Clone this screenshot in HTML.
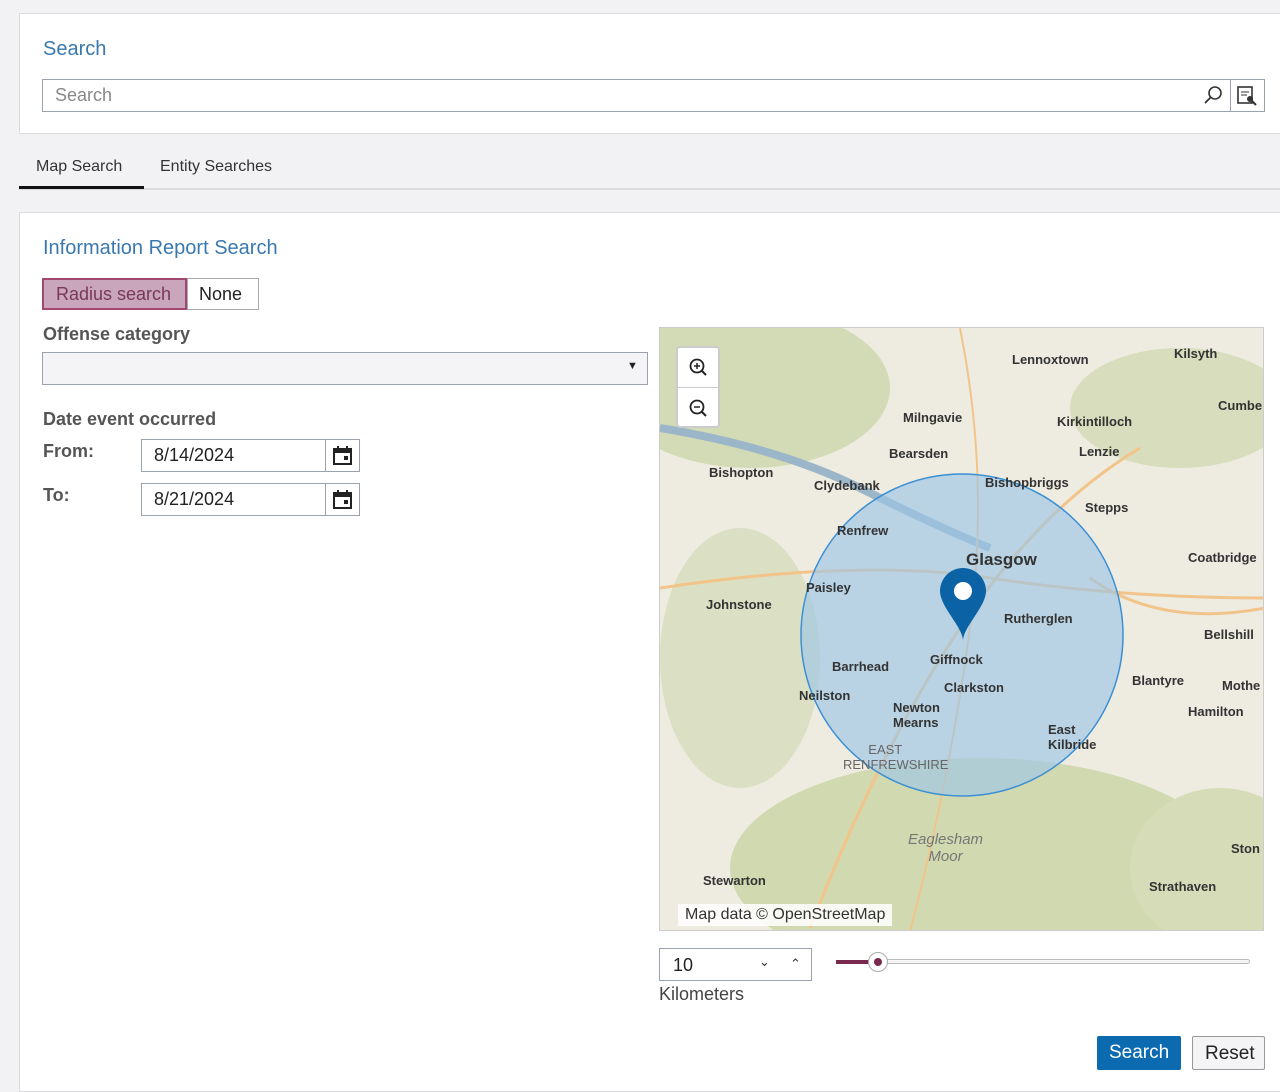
<!DOCTYPE html>
<html><head><style>
*{box-sizing:border-box;margin:0;padding:0}
body{width:1280px;height:1076px;background:#f2f2f4;font-family:"Liberation Sans",sans-serif;position:relative;overflow:hidden;color:#333}
.abs{position:absolute}
.card{position:absolute;background:#fff;border:1px solid #dcdcdf}
.h{color:#3a78b0;font-size:20px}
.lbl{font-size:18px;color:#555}
.ml{position:absolute;font-size:13px;font-weight:bold;color:#333;white-space:nowrap}
</style></head><body>
<div class="card" style="left:19px;top:13px;width:1275px;height:121px"></div>
<div class="abs h" style="left:43px;top:38px">Search</div>
<div class="abs" style="left:42px;top:79px;width:1223px;height:33px;border:1px solid #9aa3ad;background:#fff"></div>
<div class="abs" style="left:55px;top:85px;font-size:18px;color:#888">Search</div>
<svg class="abs" style="left:1203px;top:85px" width="20" height="20"><circle cx="12" cy="8" r="6" fill="none" stroke="#333" stroke-width="1.6"/><line x1="8" y1="12" x2="2" y2="18" stroke="#333" stroke-width="1.8"/></svg>
<div class="abs" style="left:1230px;top:79px;width:35px;height:33px;border-left:1px solid #9aa3ad"></div>
<svg class="abs" style="left:1237px;top:86px" width="20" height="20"><rect x="1" y="1" width="14" height="16" fill="none" stroke="#333" stroke-width="1.6"/><line x1="4" y1="6" x2="12" y2="6" stroke="#333"/><line x1="4" y1="9" x2="10" y2="9" stroke="#333"/><circle cx="13" cy="13" r="3" fill="#333"/><line x1="15" y1="15" x2="19" y2="19" stroke="#333" stroke-width="2"/></svg>
<div class="abs" style="left:19px;top:188px;width:1261px;height:2px;background:#dcdcdf"></div>
<div class="abs" style="left:19px;top:186px;width:125px;height:3px;background:#111"></div>
<div class="abs" style="left:36px;top:158px;font-size:16px;color:#333">Map Search</div>
<div class="abs" style="left:160px;top:158px;font-size:16px;color:#333">Entity Searches</div>
<div class="card" style="left:19px;top:212px;width:1275px;height:880px"></div>
<div class="abs h" style="left:43px;top:237px">Information Report Search</div>
<div class="abs" style="left:42px;top:278px;width:145px;height:32px;background:#c9a6bb;border:2px solid #a0486f;color:#7a3858;font-size:18px;padding:4px 0 0 12px">Radius search</div>
<div class="abs" style="left:187px;top:278px;width:72px;height:32px;background:#fff;border:1px solid #aaa;font-size:18px;padding:5px 0 0 11px;color:#222">None</div>
<div class="abs lbl" style="left:43px;top:324px;font-weight:bold">Offense category</div>
<div class="abs" style="left:42px;top:352px;width:606px;height:33px;background:#f4f4f6;border:1px solid #9aa3ad"></div>
<div class="abs" style="left:627px;top:360px;font-size:11px;color:#222">▼</div>
<div class="abs lbl" style="left:43px;top:409px;font-weight:bold">Date event occurred</div>
<div class="abs lbl" style="left:43px;top:441px;font-weight:bold">From:</div>
<div class="abs lbl" style="left:43px;top:485px;font-weight:bold">To:</div>
<div class="abs" style="left:141px;top:439px;width:219px;height:33px;border:1px solid #9aa3ad;background:#fff;font-size:18px;padding:5px 0 0 12px;color:#222">8/14/2024</div>
<div class="abs" style="left:141px;top:483px;width:219px;height:33px;border:1px solid #9aa3ad;background:#fff;font-size:18px;padding:5px 0 0 12px;color:#222">8/21/2024</div>
<div class="abs" style="left:325px;top:439px;width:1px;height:33px;background:#9aa3ad"></div>
<div class="abs" style="left:325px;top:483px;width:1px;height:33px;background:#9aa3ad"></div>
<svg class="abs" style="left:333px;top:446px" width="20" height="20"><rect x="1" y="3" width="17" height="15" fill="none" stroke="#222" stroke-width="2"/><rect x="1" y="3" width="17" height="4" fill="#222"/><line x1="5" y1="0" x2="5" y2="4" stroke="#222" stroke-width="2"/><line x1="14" y1="0" x2="14" y2="4" stroke="#222" stroke-width="2"/><rect x="11" y="10" width="4" height="4" fill="#222"/></svg>
<svg class="abs" style="left:333px;top:490px" width="20" height="20"><rect x="1" y="3" width="17" height="15" fill="none" stroke="#222" stroke-width="2"/><rect x="1" y="3" width="17" height="4" fill="#222"/><line x1="5" y1="0" x2="5" y2="4" stroke="#222" stroke-width="2"/><line x1="14" y1="0" x2="14" y2="4" stroke="#222" stroke-width="2"/><rect x="11" y="10" width="4" height="4" fill="#222"/></svg>

<div class="abs" style="left:659px;top:327px;width:605px;height:604px;border:1px solid #ccc;overflow:hidden;background:#eeebe0">
<svg width="605" height="604" style="position:absolute;left:0;top:0">
<ellipse cx="90" cy="60" rx="140" ry="80" fill="#d2dbb5"/>
<ellipse cx="520" cy="80" rx="110" ry="60" fill="#d8ddbd"/>
<ellipse cx="320" cy="540" rx="250" ry="110" fill="#d0d9b0"/>
<ellipse cx="80" cy="330" rx="80" ry="130" fill="#dbe0c4"/>
<ellipse cx="560" cy="540" rx="90" ry="80" fill="#d6dcb8"/>
<path d="M0 100 Q120 120 200 160 T330 220" stroke="#9bb6c8" stroke-width="8" fill="none"/>
<path d="M0 260 Q200 230 330 250 T605 270" stroke="#f2c48a" stroke-width="3" fill="none"/>
<path d="M150 600 Q220 420 300 300 T480 120" stroke="#f2c48a" stroke-width="3" fill="none"/>
<path d="M300 0 Q330 150 310 300 T250 604" stroke="#f2c48a" stroke-width="2" fill="none"/>
<path d="M430 250 Q500 300 605 280" stroke="#f2c48a" stroke-width="3" fill="none"/>
<circle cx="302" cy="307" r="161" fill="#9cc6e6" fill-opacity="0.65" stroke="#3b8fd4" stroke-width="1.5"/>
<path d="M303 240 a23 23 0 0 1 23 23 c0 16 -23 36 -23 50 c0 -14 -23 -34 -23 -50 a23 23 0 0 1 23 -23z" fill="#0b63a6"/>
<circle cx="303" cy="263" r="9" fill="#fff"/>
</svg>
<div style="position:absolute;left:16px;top:18px;width:44px;height:82px;background:#fff;border:2px solid #ccc;border-radius:4px"></div>
<div style="position:absolute;left:18px;top:59px;width:40px;height:1px;background:#ccc"></div>
<svg style="position:absolute;left:28px;top:29px" width="20" height="20"><circle cx="9" cy="9" r="6.5" fill="none" stroke="#222" stroke-width="1.8"/><line x1="14" y1="14" x2="18" y2="18" stroke="#222" stroke-width="2"/><line x1="6" y1="9" x2="12" y2="9" stroke="#222" stroke-width="1.5"/><line x1="9" y1="6" x2="9" y2="12" stroke="#222" stroke-width="1.5"/></svg>
<svg style="position:absolute;left:28px;top:70px" width="20" height="20"><circle cx="9" cy="9" r="6.5" fill="none" stroke="#222" stroke-width="1.8"/><line x1="14" y1="14" x2="18" y2="18" stroke="#222" stroke-width="2"/><line x1="6" y1="9" x2="12" y2="9" stroke="#222" stroke-width="1.5"/></svg>
<div class="ml" style="left:352px;top:24px">Lennoxtown</div>
<div class="ml" style="left:514px;top:18px">Kilsyth</div>
<div class="ml" style="left:558px;top:70px">Cumbe</div>
<div class="ml" style="left:243px;top:82px">Milngavie</div>
<div class="ml" style="left:397px;top:86px">Kirkintilloch</div>
<div class="ml" style="left:229px;top:118px">Bearsden</div>
<div class="ml" style="left:419px;top:116px">Lenzie</div>
<div class="ml" style="left:49px;top:137px">Bishopton</div>
<div class="ml" style="left:154px;top:150px">Clydebank</div>
<div class="ml" style="left:325px;top:147px">Bishopbriggs</div>
<div class="ml" style="left:425px;top:172px">Stepps</div>
<div class="ml" style="left:177px;top:195px">Renfrew</div>
<div class="ml" style="left:306px;top:222px;font-size:17px">Glasgow</div>
<div class="ml" style="left:528px;top:222px">Coatbridge</div>
<div class="ml" style="left:146px;top:252px">Paisley</div>
<div class="ml" style="left:46px;top:269px">Johnstone</div>
<div class="ml" style="left:344px;top:283px">Rutherglen</div>
<div class="ml" style="left:544px;top:299px">Bellshill</div>
<div class="ml" style="left:172px;top:331px">Barrhead</div>
<div class="ml" style="left:270px;top:324px">Giffnock</div>
<div class="ml" style="left:472px;top:345px">Blantyre</div>
<div class="ml" style="left:562px;top:350px">Mothe</div>
<div class="ml" style="left:284px;top:352px">Clarkston</div>
<div class="ml" style="left:139px;top:360px">Neilston</div>
<div class="ml" style="left:528px;top:376px">Hamilton</div>
<div class="ml" style="left:233px;top:372px">Newton<br>Mearns</div>
<div class="ml" style="left:388px;top:394px">East<br>Kilbride</div>
<div class="ml" style="left:183px;top:414px;font-weight:normal;color:#666;font-size:13px">&nbsp;&nbsp;&nbsp;&nbsp;&nbsp;&nbsp;&nbsp;EAST<br>RENFREWSHIRE</div>
<div class="ml" style="left:248px;top:503px;font-weight:normal;font-style:italic;color:#777;font-size:15px;text-align:center">Eaglesham<br>Moor</div>
<div class="ml" style="left:571px;top:513px">Ston</div>
<div class="ml" style="left:43px;top:545px">Stewarton</div>
<div class="ml" style="left:489px;top:551px">Strathaven</div>
<div style="position:absolute;left:18px;top:576px;background:rgba(255,255,255,.85);font-size:16px;padding:2px 7px;color:#333">Map data © OpenStreetMap</div>
</div>

<div class="abs" style="left:659px;top:948px;width:153px;height:33px;border:1px solid #9aa3ad;background:#fff;font-size:18px;padding:6px 0 0 13px;color:#222">10</div>
<div class="abs" style="left:759px;top:954px;font-size:13px;color:#333">⌄</div>
<div class="abs" style="left:790px;top:956px;font-size:13px;color:#333">⌃</div>
<div class="abs" style="left:659px;top:984px;font-size:18px;color:#444">Kilometers</div>
<div class="abs" style="left:872px;top:959px;width:378px;height:5px;border:1px solid #bbb;border-radius:3px;background:#f5f5f5"></div>
<div class="abs" style="left:836px;top:960px;width:38px;height:4px;background:#7a2a4f"></div>
<div class="abs" style="left:868px;top:952px;width:20px;height:20px;border-radius:50%;background:#fff;border:1px solid #aaa"></div>
<div class="abs" style="left:874px;top:958px;width:8px;height:8px;border-radius:50%;background:#7a2a4f"></div>
<div class="abs" style="left:1097px;top:1036px;width:84px;height:34px;background:#0b6ab0;color:#fff;font-size:19px;padding:6px 0 0 12px;border-radius:2px">Search</div>
<div class="abs" style="left:1192px;top:1036px;width:73px;height:34px;background:#f4f4f6;border:1px solid #999;font-size:19px;padding:6px 0 0 12px;border-radius:2px;color:#222">Reset</div>
</body></html>
